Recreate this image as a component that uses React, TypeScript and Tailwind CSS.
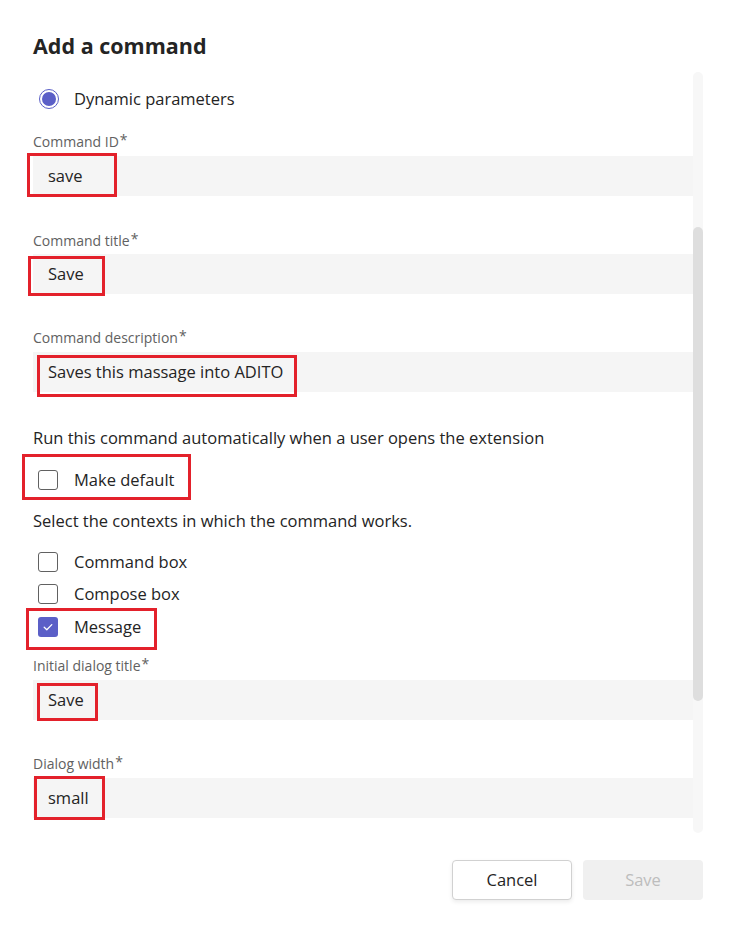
import React from "react";

const font = { fontFamily: '"Open Sans", "Noto Sans", sans-serif' };

function RedBox({ cls }: { cls: string }) {
  return <div className={`pointer-events-none absolute border-[3px] border-[#e3212b] ${cls}`} />;
}

function Label({ text, cls }: { text: string; cls: string }) {
  return (
    <div className={`flex h-[20px] items-center text-[14px] text-[#616161] ${cls}`}>
      {text}
      <span className="ml-[1px] -translate-y-[2px] text-[14px]">*</span>
    </div>
  );
}

function Field({ value, cls, box }: { value: string; cls: string; box: string }) {
  return (
    <div className={`relative flex h-[40px] items-center bg-[#f5f5f5] pl-[15px] text-[16.5px] text-[#242424] ${cls}`}>
      {value}
      <RedBox cls={box} />
    </div>
  );
}

function Checkbox({ label, checked, cls, box }: { label: string; checked?: boolean; cls: string; box?: string }) {
  return (
    <div className={`relative flex h-[32px] items-center ${cls}`}>
      {checked ? (
        <div className="ml-[5px] flex h-[20px] w-[20px] items-center justify-center rounded-[3px] bg-[#5b5fc7]">
          <svg width="12" height="12" viewBox="0 0 12 12" fill="none">
            <path d="M2.2 6.3 L4.8 8.8 L9.8 3.6" stroke="white" strokeWidth="1.3" strokeLinecap="round" strokeLinejoin="round" />
          </svg>
        </div>
      ) : (
        <div className="ml-[5px] h-[20px] w-[20px] rounded-[3px] border border-[#616161] bg-white" />
      )}
      <span className="ml-[16px] text-[16.5px] text-[#242424]">{label}</span>
      {box && <RedBox cls={box} />}
    </div>
  );
}

export default function App() {
  return (
    <div className="flex h-[937px] w-[737px] flex-col bg-white" style={font}>
      <div className="h-[72px] pl-[33px] pt-[31px]">
        <h1 className="text-[21.5px] font-bold leading-[30px] text-[#242424]">Add a command</h1>
      </div>
      <div className="flex h-[761px] pr-[34px]">
        <div className="flex-1 overflow-hidden pl-[33px] pt-[11px]">
          <div className="flex h-[32px] items-center">
            <div className="ml-[6px] flex h-[20px] w-[20px] items-center justify-center rounded-full border border-[#5b5fc7]">
              <div className="h-[14px] w-[14px] rounded-full bg-[#5b5fc7]" />
            </div>
            <span className="ml-[15px] text-[16.5px] text-[#242424]">Dynamic parameters</span>
          </div>
          <Label text="Command ID" cls="mt-[16px]" />
          <Field value="save" cls="mt-[5px]" box="-left-[6px] -top-[3px] w-[90px] h-[44px]" />
          <Label text="Command title" cls="mt-[34px]" />
          <Field value="Save" cls="mt-[4px]" box="-left-[5px] top-[2px] w-[77px] h-[40px]" />
          <Label text="Command description" cls="mt-[33px]" />
          <Field value="Saves this massage into ADITO" cls="mt-[5px]" box="left-[4px] top-[3px] w-[260px] h-[42px]" />
          <div className="mt-[35px] flex h-[22px] items-center text-[16.5px] text-[#242424]">
            Run this command automatically when a user opens the extension
          </div>
          <Checkbox label="Make default" cls="mt-[15px]" box="-left-[11px] -top-[10px] w-[169px] h-[46px]" />
          <div className="mt-[14px] flex h-[22px] items-center text-[16.5px] text-[#242424]">
            Select the contexts in which the command works.
          </div>
          <Checkbox label="Command box" cls="mt-[14px]" />
          <Checkbox label="Compose box" cls="" />
          <Checkbox label="Message" checked cls="mt-[1px]" box="-left-[7px] -top-[3px] w-[131px] h-[42px]" />
          <Label text="Initial dialog title" cls="mt-[12px]" />
          <Field value="Save" cls="mt-[5px]" box="left-[4px] top-[3px] w-[61px] h-[38px]" />
          <Label text="Dialog width" cls="mt-[33px]" />
          <Field value="small" cls="mt-[5px]" box="left-[1px] -top-[2px] w-[71px] h-[44px]" />
        </div>
        <div className="flex w-[10px] flex-col rounded-full bg-[#f7f7f7]">
          <div className="h-[155px]" />
          <div className="h-[474px] rounded-full bg-[#dedede]" />
        </div>
      </div>
      <div className="flex justify-end gap-[11px] pr-[34px] pt-[27px]">
        <button className="h-[40px] w-[120px] rounded-[4px] border border-[#d1d1d1] bg-white text-[16.5px] text-[#242424] shadow-[0_2px_4px_rgba(0,0,0,0.08)]">
          Cancel
        </button>
        <button className="h-[40px] w-[120px] rounded-[4px] bg-[#f0f0f0] text-[16.5px] text-[#bdbdbd]">
          Save
        </button>
      </div>
    </div>
  );
}
